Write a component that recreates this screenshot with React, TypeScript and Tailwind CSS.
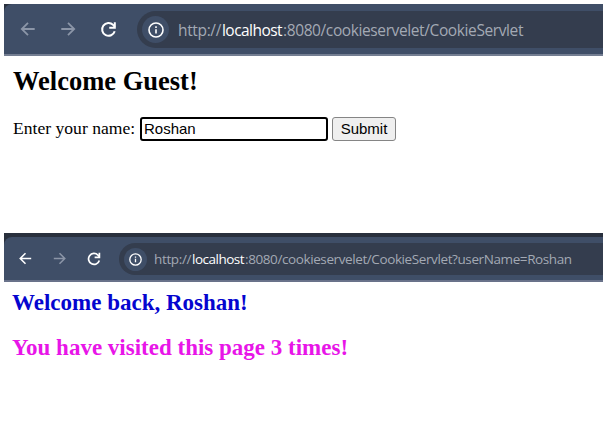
type IconProps = { size: number; className?: string };

function Arrow({ size, className = "" }: IconProps) {
  return (
    <svg width={size} height={size} viewBox="0 0 20 20" fill="none" stroke="currentColor" strokeWidth="1.8" className={`shrink-0 ${className}`}>
      <path d="M16.7 10H4.3M10 3.8 3.8 10l6.2 6.2" />
    </svg>
  );
}

function Reload({ size }: IconProps) {
  return (
    <svg width={size} height={size} viewBox="0 0 20 20" fill="none" stroke="currentColor" strokeWidth="1.9" className="shrink-0 text-white">
      <path d="M15.9 11.6A6.1 6.1 0 1 1 14.4 5.6L16 7.5" />
      <path d="M16 3V8.3H10.7" />
    </svg>
  );
}

function Info({ size }: IconProps) {
  return (
    <svg width={size} height={size} viewBox="0 0 16 16" fill="none" stroke="currentColor" strokeWidth="1.6" className="text-white">
      <circle cx="8" cy="8" r="7" />
      <path d="M8 7.2v4.3M8 4.2v1.7" />
    </svg>
  );
}

export default function App() {
  return (
    <div className="h-[421px] w-[603px] overflow-hidden bg-white pl-1 pt-1">
      <section className="h-[229px]">
        <div className="h-[52px] bg-[#29303d]">
          <div className="flex h-[52px] items-start rounded-tl-lg border-b-2 border-[#747e92] bg-[#3f4e67] pl-[14px] pt-[7px]">
            <div className="flex h-[36px] w-[119px] items-center gap-5">
              <Arrow size={20} className="text-[#8b95a7]" />
              <Arrow size={20} className="rotate-180 text-[#8b95a7]" />
              <Reload size={21} />
            </div>
            <div className="flex h-[37px] flex-1 items-center rounded-l-full bg-[#343d4e] pl-[5px]">
              <div className="flex size-[27px] items-center justify-center rounded-full bg-[#3f4e67]">
                <Info size={16} />
              </div>
              <div className="ml-[9px] flex whitespace-pre font-['Open_Sans',sans-serif] text-[15.5px] leading-5 text-[#a3a9b4]">
                <span className="w-[44px] tracking-[-0.35px]">http://</span>
                <span className="w-[61px] tracking-[-0.55px] text-white">localhost</span>
                <span className="tracking-[-0.39px]">:8080/cookieservelet/CookieServlet</span>
              </div>
            </div>
          </div>
        </div>
        <div className="pl-[9px] pt-[9px]">
          <h1 className="font-['Liberation_Serif',serif] text-[26.5px] font-bold leading-8 text-black">Welcome Guest!</h1>
          <div className="mt-5 flex h-[24px] items-start">
            <label className="w-[126px] whitespace-nowrap font-['Liberation_Serif',serif] text-[17.6px] leading-[22px] text-black">Enter your name:</label>
            <div className="ml-px flex h-[24px] w-[188px] items-center rounded-[3px] border-2 border-black pl-[2px] font-['Liberation_Sans',sans-serif] text-[15px] leading-5 text-black">Roshan</div>
            <button className="ml-1 h-[24px] w-[64px] rounded-[3px] border border-[#858585] bg-[#efefef] font-['Liberation_Sans',sans-serif] text-[15px] leading-5 text-black">Submit</button>
          </div>
        </div>
      </section>

      <section>
        <div className="h-[49px] bg-[#29303d] pt-1">
          <div className="flex h-[45px] items-start rounded-tl-lg border-b-2 border-[#69728a] bg-[#3f4e67] pl-[13px] pt-[6px]">
            <div className="flex h-[31px] w-[102px] items-center gap-[17px]">
              <Arrow size={17} className="text-white" />
              <Arrow size={17} className="rotate-180 text-[#8b95a7]" />
              <Reload size={18} />
            </div>
            <div className="flex h-[32px] flex-1 items-center rounded-l-full bg-[#343d4e] pl-[5px]">
              <div className="flex size-[23px] items-center justify-center rounded-full bg-[#3f4e67]">
                <Info size={13} />
              </div>
              <div className="ml-[7px] flex whitespace-pre font-['Open_Sans',sans-serif] text-[13.5px] leading-5 text-[#a3a9b4]">
                <span className="w-[38px] tracking-[-0.35px]">http://</span>
                <span className="w-[53px] tracking-[-0.5px] text-white">localhost</span>
                <span className="tracking-[-0.4px]">:8080/cookieservelet/CookieServlet?userName=Roshan</span>
              </div>
            </div>
          </div>
        </div>
        <div className="pl-2 pt-[7px] font-['Liberation_Serif',serif] text-[23px] font-bold leading-7">
          <h2 className="text-[#0505cf]">Welcome back, Roshan!</h2>
          <h2 className="mt-[17px] text-[#e815e8]">You have visited this page 3 times!</h2>
        </div>
      </section>
    </div>
  );
}
